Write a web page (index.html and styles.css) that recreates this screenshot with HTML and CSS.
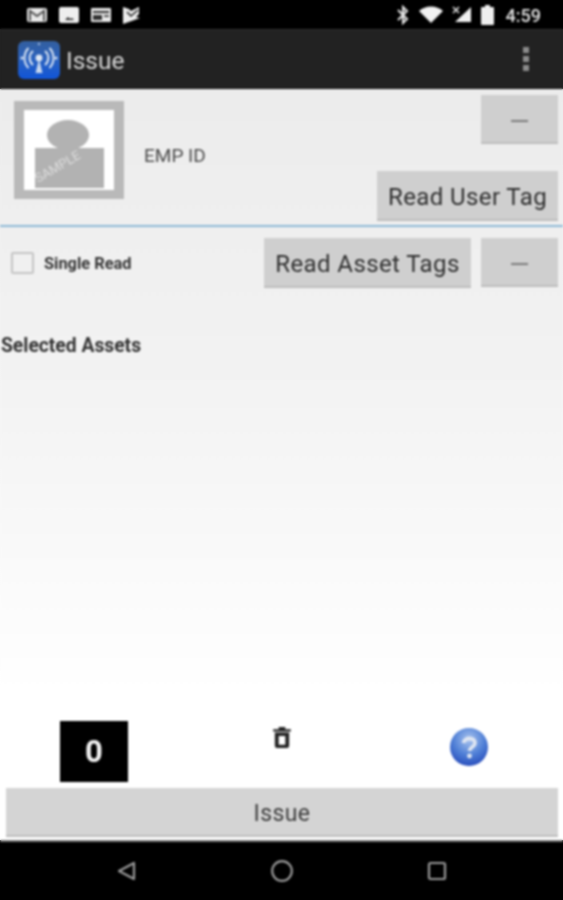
FILE: index.html
```html
<!DOCTYPE html>
<html lang="en">
<head>
<meta charset="utf-8">
<title>Issue</title>
<link rel="stylesheet" href="styles.css">
</head>
<body>
<div class="screen">
  <header class="status">
    <div class="status-left">
      <svg class="ic" viewBox="0 0 22 18" width="22" height="18"><rect x="1" y="2" width="20" height="14" rx="2" fill="#e8e8e8"/><path d="M4 15V5l7 5 7-5v10" fill="none" stroke="#555" stroke-width="2"/></svg>
      <svg class="ic" viewBox="0 0 20 18" width="20" height="18"><rect x="0" y="1" width="20" height="16" rx="2" fill="#eee"/><path d="M6 14l3-3 2 2 2-1 2 2z" fill="#222"/></svg>
      <svg class="ic" viewBox="0 0 22 18" width="22" height="18"><rect x="1" y="2" width="20" height="14" rx="1" fill="#e8e8e8"/><rect x="3" y="5" width="16" height="2" fill="#333"/><rect x="3" y="9" width="9" height="5" fill="#333"/><rect x="14" y="9" width="5" height="2" fill="#555"/></svg>
      <svg class="ic" viewBox="0 0 18 18" width="18" height="18"><path d="M0 1l6 2 2 2 8-4v7l-3 3 4 1L0 18z" fill="#eee"/><path d="M4 6l4 4 7-6" fill="none" stroke="#222" stroke-width="1.6"/></svg>
    </div>
    <div class="status-right">
      <svg viewBox="0 0 14 20" width="14" height="20"><path d="M2 5l9 9-4 4V2l4 4-9 9" fill="none" stroke="#e6e6e6" stroke-width="2"/></svg>
      <svg viewBox="0 0 24 18" width="24" height="18"><path d="M0 5C6-1 18-1 24 5L12 17z" fill="#f2f2f2"/></svg>
      <svg viewBox="0 0 20 18" width="20" height="18"><path d="M19 1v15H3z" fill="#f0f0f0"/><path d="M1 1l6 6M7 1L1 7" stroke="#e0e0e0" stroke-width="1.6"/></svg>
      <svg viewBox="0 0 13 20" width="13" height="20"><path d="M4 2V0h5v2h3a1 1 0 0 1 1 1v16a1 1 0 0 1-1 1H1a1 1 0 0 1-1-1V3a1 1 0 0 1 1-1z" fill="#eee"/></svg>
      <span class="clock">4:59</span>
    </div>
  </header>

  <div class="appbar">
    <div class="brand">
      <svg class="logo" viewBox="0 0 42 38" width="42" height="38">
        <defs><linearGradient id="lg" x1="0" y1="0" x2="0" y2="1"><stop offset="0" stop-color="#345f9e"/><stop offset=".5" stop-color="#2a62c0"/><stop offset="1" stop-color="#1155d8"/></linearGradient></defs>
        <rect width="42" height="38" rx="6" fill="url(#lg)"/>
        <circle cx="21" cy="17" r="3.4" fill="#dfe8f4"/>
        <path d="M21 18l-3.500 14h7z" fill="#c9d8ee"/>
        <g fill="none" stroke="#dbe6f4" stroke-width="1.900">
          <path d="M15 24a9 9 0 0 1 0-14M27 10a9 9 0 0 1 0 14"/>
          <path d="M10.500 27a14.500 14.500 0 0 1 0-20M31.500 7a14.500 14.500 0 0 1 0 20"/>
        </g>
        <circle cx="4" cy="17" r="1.5" fill="#dbe6f4"/><circle cx="38" cy="17" r="1.5" fill="#dbe6f4"/>
        <circle cx="21" cy="3" r="1.2" fill="#9fb8dc"/>
      </svg>
      <span class="title">Issue</span>
    </div>
    <div class="kebab"><i></i><i></i><i></i></div>
  </div>

  <main class="content">
    <section class="user">
      <div class="avatar">
        <svg viewBox="0 0 90 80" width="90" height="80">
          <ellipse cx="44" cy="25" rx="21" ry="15" fill="#b2b2b2"/>
          <rect x="11" y="38" width="69" height="40" fill="#b2b2b2"/>
          <text class="stamp" x="14" y="73" transform="rotate(-30 14 73)">SAMPLE</text>
        </svg>
      </div>
      <span class="emp">EMP ID</span>
      <div class="user-actions">
        <button class="btn small">—</button>
        <button class="btn">Read User Tag</button>
      </div>
    </section>

    <section class="read">
      <label class="check"><span class="box"></span><span class="check-label">Single Read</span></label>
      <div class="read-actions">
        <button class="btn wide">Read Asset Tags</button>
        <button class="btn small">—</button>
      </div>
    </section>

    <h2 class="selected">Selected Assets</h2>

    <div class="spacer"></div>

    <div class="tools">
      <div class="count">0</div>
      <svg class="trash" viewBox="0 0 16 20" width="18" height="22"><path d="M5 1h6v2h5v2H0V3h5z" fill="#222"/><path d="M1.500 6h13v12a2 2 0 0 1-2 2h-9a2 2 0 0 1-2-2zM5 9v8h6V9z" fill="#222" fill-rule="evenodd"/></svg>
      <svg class="help" viewBox="0 0 40 40" width="40" height="40">
        <defs><radialGradient id="hg" cx=".5" cy=".3" r=".75"><stop offset="0" stop-color="#a9c4ee"/><stop offset=".55" stop-color="#4f7fd6"/><stop offset="1" stop-color="#2346b8"/></radialGradient></defs>
        <circle cx="20" cy="20" r="19" fill="url(#hg)"/>
        <path d="M14.500 16c1-6 11.500-6 11.500 0 0 4-5.500 4-5.500 8" fill="none" stroke="#dfe6f2" stroke-width="3.800"/>
        <circle cx="20.500" cy="29" r="2.400" fill="#dfe6f2"/>
      </svg>
    </div>
    <button class="btn issue">Issue</button>
  </main>

  <nav class="navbar">
    <svg viewBox="0 0 20 20" width="20" height="20"><path d="M18 2v16L3 10z" fill="none" stroke="#9a9a9a" stroke-width="2.200" stroke-linejoin="round"/></svg>
    <svg viewBox="0 0 24 24" width="24" height="24"><circle cx="12" cy="12" r="9.800" fill="none" stroke="#9a9a9a" stroke-width="2.200"/></svg>
    <svg viewBox="0 0 20 20" width="20" height="20"><rect x="2" y="2" width="16" height="16" rx="1.500" fill="none" stroke="#9a9a9a" stroke-width="2.200"/></svg>
  </nav>
</div>
</body>
</html>
```

FILE: styles.css
```css
* { box-sizing: border-box; }
html, body { margin: 0; padding: 0; }
body { width: 563px; height: 900px; overflow: hidden; font-family: Roboto, "Liberation Sans", sans-serif; background: linear-gradient(#000 0 29px, #222 29px 89px, #ececec 89px, #fff 720px, #fff 840px, #000 840px); }
.screen { width: 563px; height: 900px; display: flex; flex-direction: column; filter: blur(0.8px); }

.status { height: 29px; flex: none; background: #000; display: flex; justify-content: space-between; align-items: center; padding: 1px 22px 0 26px; }
.status-left { display: flex; align-items: center; gap: 11px; }
.status-right { display: flex; align-items: center; gap: 9px; }
.clock { color: #e4e4e4; font-size: 18px; font-weight: 500; margin-left: 3px; }

.appbar { height: 60px; flex: none; background: #222; border-top: 1px solid #333; border-bottom: 1px solid #111; display: flex; justify-content: space-between; align-items: center; padding: 0 34px 0 18px; }
.brand { display: flex; align-items: center; gap: 6px; }
.logo { display: block; margin-top: 1px; }
.title { color: #d8d8d8; font-size: 24.500px; margin-top: 2px; }
.kebab { display: flex; flex-direction: column; gap: 3px; }
.kebab i { width: 6px; height: 6px; background: #8c8c8c; display: block; }

.content { flex: 1; min-height: 0; display: flex; flex-direction: column; background: linear-gradient(#ececec, #f3f3f3 40%, #fff 80%); }

.btn { display: block; border: 0; border-bottom: 2px solid #bdbdbd; background: #cfcfcf; color: #2e2e2e; font: 400 24px Roboto, "Liberation Sans", sans-serif; letter-spacing: .4px; padding: 3px 0 0; height: 50px; }
.btn.small { width: 77px; height: 49px; color: #777; font-size: 26px; padding: 5px 0 0; }
.btn.wide { width: 207px; }

.user { height: 138px; flex: none; display: flex; align-items: center; padding: 0 5px 0 14px; border-bottom: 2px solid #8db9d6; }
.avatar { width: 110px; height: 98px; flex: none; align-self: flex-start; margin-top: 12px; border-style: solid; border-color: #b9b9b9; border-width: 9px 10px; background: #fff; overflow: hidden; }
.avatar svg { display: block; }
.stamp { font: 400 13px Roboto, sans-serif; fill: #dcdcdc; }
.emp { margin-left: 20px; color: #4a4a4a; font-size: 19px; margin-top: -4px; }
.user-actions { margin-left: auto; align-self: stretch; display: flex; flex-direction: column; align-items: flex-end; justify-content: space-between; padding: 6px 0 4px; }
.user-actions .btn:not(.small) { width: 181px; }

.read { height: 62px; flex: none; display: flex; align-items: center; justify-content: space-between; padding: 11px 5px 1px 11px; }
.check { display: flex; align-items: center; gap: 10px; }
.box { width: 23px; height: 22px; border: 2px solid #c4c4c4; border-radius: 2px; display: block; }
.check-label { font-size: 16.400px; font-weight: 700; color: #333; }
.read-actions { display: flex; gap: 10px; }

.selected { margin: 0; padding: 47px 0 0 1px; font-size: 19.300px; line-height: 20px; font-weight: 700; color: #333; }

.spacer { flex: 1; }

.tools { height: 67px; flex: none; position: relative; }
.count { position: absolute; left: 60px; top: 0; width: 68px; height: 61px; background: #000; color: #f2f2f2; font-size: 31px; font-weight: 700; display: flex; align-items: center; justify-content: center; }
.trash { position: absolute; left: 273px; top: 5px; }
.help { position: absolute; left: 449px; top: 6px; }

.btn.issue { margin: 0 5px 3px 6px; width: 552px; height: 49px; flex: none; font-size: 23px; color: #3c3c3c; background: #d4d4d4; }

.navbar { height: 60px; flex: none; background: #000; border-top: 2px solid #777; display: flex; justify-content: space-between; align-items: center; padding: 0 116px; }
```
